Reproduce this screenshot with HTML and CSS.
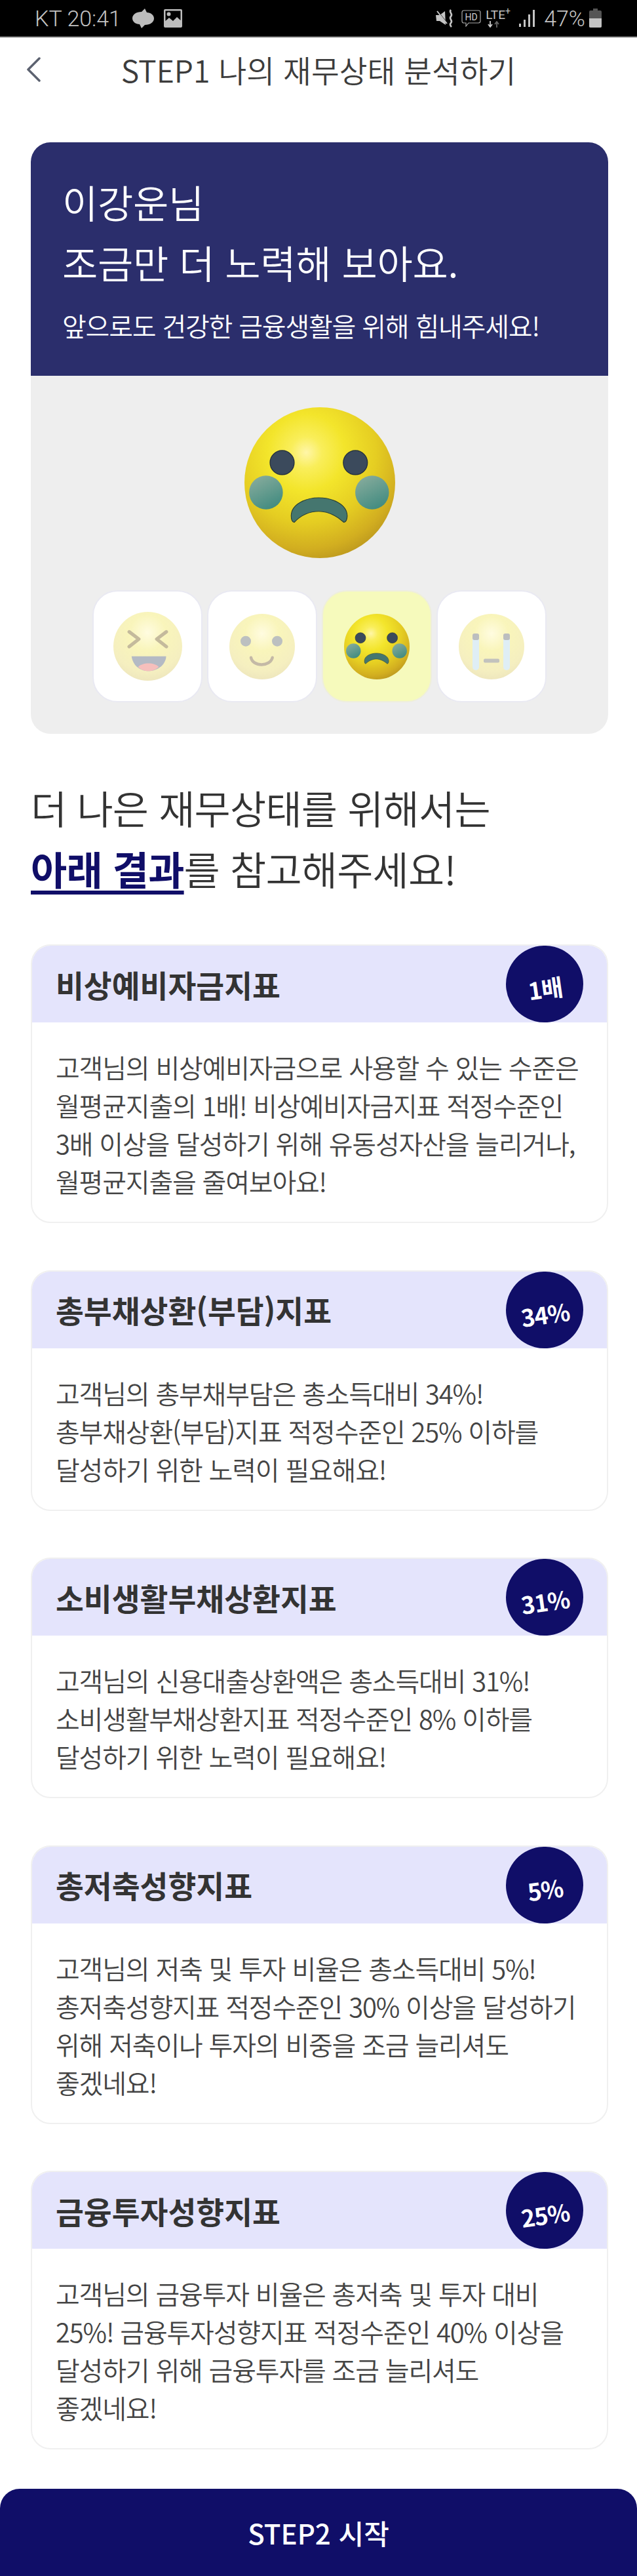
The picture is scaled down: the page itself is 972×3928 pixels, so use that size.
FILE: index.html
```html
<!DOCTYPE html>
<html lang="ko">
<head>
<meta charset="utf-8">
<title>STEP1 나의 재무상태 분석하기</title>
<link rel="stylesheet" href="styles.css">
</head>
<body>
<svg class="defs" aria-hidden="true">
  <defs>
    <radialGradient id="skin" cx="41%" cy="30%" r="75%">
      <stop offset="0" stop-color="#fff6a8"/>
      <stop offset=".14" stop-color="#f9ee5a"/>
      <stop offset=".34" stop-color="#f3e52b"/>
      <stop offset=".62" stop-color="#e5cd22"/>
      <stop offset=".85" stop-color="#d2ae20"/>
      <stop offset="1" stop-color="#b9951e"/>
    </radialGradient>
    <radialGradient id="skinpale" cx="50%" cy="30%" r="75%">
      <stop offset="0" stop-color="#fffce0"/>
      <stop offset=".35" stop-color="#f9f5bb"/>
      <stop offset=".75" stop-color="#f5efc0"/>
      <stop offset="1" stop-color="#ece4bc"/>
    </radialGradient>
    <linearGradient id="cheek" x1="25%" y1="0%" x2="75%" y2="100%">
      <stop offset="0" stop-color="#86ab9c"/>
      <stop offset="1" stop-color="#3f8a7f"/>
    </linearGradient>
    <symbol id="face-sad" viewBox="0 0 100 100">
      <circle cx="50" cy="50" r="50" fill="url(#skin)"/>
      <circle cx="25" cy="36.7" r="8" fill="#3b4a5c" stroke="#26323f" stroke-width=".6"/>
      <circle cx="73.6" cy="36.7" r="8" fill="#3b4a5c" stroke="#26323f" stroke-width=".6"/>
      <circle cx="14.3" cy="56.5" r="11.2" fill="url(#cheek)"/>
      <circle cx="84.7" cy="56.5" r="11.2" fill="url(#cheek)"/>
      <path d="M31 72C31 64 41 60 49.3 60C58 60 68 64 68.2 72Q68 76 66 76.3C60 71 54 69 49.3 69C44 69 38 71 33 76.3Q31 76 31 72Z" fill="#45766f" stroke="#2a3f33" stroke-width=".5"/>
    </symbol>
    <symbol id="face-laugh" viewBox="0 0 100 100">
      <circle cx="50" cy="50" r="50" fill="url(#skinpale)"/>
      <path d="M23 29L37 39.5L23 50.5M77 29L63 39.5L77 50.5" fill="none" stroke="#c4ba9c" stroke-width="5" stroke-linecap="round" stroke-linejoin="round"/>
      <path d="M26.5 64.5H76.7C76 77 64 86 51 86C38 86 28 77 26.5 64.5Z" fill="#b4bac4"/>
      <path d="M36 80C42 73 60 73 66 80C60 85 56 86 51 86C46 86 41 85 36 80Z" fill="#f6bfbc"/>
    </symbol>
    <symbol id="face-smile" viewBox="0 0 100 100">
      <circle cx="50" cy="50" r="50" fill="url(#skinpale)"/>
      <circle cx="25" cy="41.7" r="8" fill="#bcc0c0"/>
      <circle cx="73" cy="41.7" r="8" fill="#bcc0c0"/>
      <path d="M33 66.7C36 81 62 81 65.7 66.7" fill="none" stroke="#c4b9a6" stroke-width="4.500" stroke-linecap="round"/>
    </symbol>
    <symbol id="face-cry" viewBox="0 0 100 100">
      <circle cx="50" cy="50" r="50" fill="url(#skinpale)"/>
      <rect x="21" y="34" width="10" height="52" rx="5" fill="#dfeef5"/>
      <rect x="68" y="34" width="10" height="52" rx="5" fill="#dfeef5"/>
      <rect x="21" y="30" width="10" height="10" rx="3" fill="#bcbebf"/>
      <rect x="68" y="30" width="10" height="10" rx="3" fill="#bcbebf"/>
      <rect x="38" y="68.500" width="24" height="6" rx="2" fill="#c2c2bd"/>
    </symbol>
  </defs>
</svg>

<header class="status">
  <div class="status-group status-left">
    <span class="status-text">KT 20:41</span>
    <svg class="ico-sync" viewBox="0 0 33 30"><path fill="#bdbdbd" d="M19 0L22 6C28 6 33 10 33 15C33 21 27 25 19 25L14 30L11 24C5 24 0 20 0 15C0 9 6 5 14 5Z"/></svg>
    <svg class="ico-image" viewBox="0 0 28 28"><path fill="#bdbdbd" fill-rule="evenodd" d="M2 0H26Q28 0 28 2V26Q28 28 26 28H2Q0 28 0 26V2Q0 0 2 0ZM2.500 2.500V18L8 13L14 18L20 12L25.500 17V2.500ZM7.500 4.500A3 3 0 1 1 7.500 10.500A3 3 0 1 1 7.500 4.500Z"/></svg>
  </div>
  <div class="status-group status-right">
    <svg class="ico-mute" viewBox="0 0 28 28"><path fill="#c4c4c4" d="M0 9H6L14 3L15 24L6 18H1Z"/><path d="M1 1L16 20" stroke="#000" stroke-width="2"/><path d="M2 3L17 22" stroke="#c4c4c4" stroke-width="2"/><path d="M23 1C19 5 27 7 23 11C19 15 27 17 23 21C21 23 22 25 24 27" fill="none" stroke="#c4c4c4" stroke-width="2.600"/></svg>
    <svg class="ico-hd" viewBox="0 0 30 26"><path d="M4 1H26Q29 1 29 4V17Q29 20 26 20H11L7 25V20H4Q1 20 1 17V4Q1 1 4 1Z" fill="none" stroke="#aaa" stroke-width="1.200"/><text x="15" y="16" text-anchor="middle" class="hd-text">HD</text></svg>
    <span class="lte">
      <span class="lte-text">LTE<sup class="lte-plus">+</sup></span>
      <svg class="ico-arrows" viewBox="0 0 20 10"><path d="M5 0V8M2 5L5 9L8 5" fill="none" stroke="#ccc" stroke-width="1.800"/><path d="M15 10V2M12 5L15 1L18 5" fill="none" stroke="#666" stroke-width="1.800"/></svg>
    </span>
    <svg class="ico-signal" viewBox="0 0 25 28"><rect x="0" y="22" width="3" height="5" fill="#c4c4c4"/><rect x="7" y="16" width="3" height="11" fill="#c4c4c4"/><rect x="14" y="8" width="3" height="19" fill="#c4c4c4"/><rect x="21" y="1" width="3" height="26" fill="#c4c4c4"/></svg>
    <span class="status-text">47%</span>
    <svg class="ico-battery" viewBox="0 0 19 29"><path d="M6 0H13V3H17Q19 3 19 5V27Q19 29 17 29H2Q0 29 0 27V5Q0 3 2 3H6Z" fill="#555"/><path d="M0 15H19V27Q19 29 17 29H2Q0 29 0 27Z" fill="#c4c4c4"/></svg>
  </div>
</header>

<nav class="topbar">
  <svg class="back" viewBox="0 0 22 38"><path d="M20 2L3 19L20 36" fill="none" stroke="#5c6270" stroke-width="3.500" stroke-linecap="round" stroke-linejoin="round"/></svg>
  <h1 class="page-title">STEP1 나의 재무상태 분석하기</h1>
  <span></span>
</nav>

<main class="content">
  <section class="hero">
    <div class="hero-top">
      <p class="hero-title">이강운님<br>조금만 더 노력해 보아요.</p>
      <p class="hero-sub">앞으로도 건강한 금융생활을 위해 힘내주세요!</p>
    </div>
    <div class="hero-body">
      <svg class="face-large"><use href="#face-sad"/></svg>
      <div class="tiles">
        <div class="tile"><svg class="face-one"><use href="#face-laugh"/></svg></div>
        <div class="tile"><svg class="face-small"><use href="#face-smile"/></svg></div>
        <div class="tile tile-active"><svg class="face-small"><use href="#face-sad"/></svg></div>
        <div class="tile"><svg class="face-small"><use href="#face-cry"/></svg></div>
      </div>
    </div>
  </section>

  <h2 class="lead">더 나은 재무상태를 위해서는<br><strong class="lead-mark">아래 결과</strong>를 참고해주세요!</h2>

  <article class="card">
    <div class="card-head"><h3 class="card-title">비상예비자금지표</h3><span class="badge">1배</span></div>
    <p class="card-text">고객님의 비상예비자금으로 사용할 수 있는 수준은<br>월평균지출의 1배! 비상예비자금지표 적정수준인<br>3배 이상을 달성하기 위해 유동성자산을 늘리거나,<br>월평균지출을 줄여보아요!</p>
  </article>
  <article class="card">
    <div class="card-head"><h3 class="card-title">총부채상환(부담)지표</h3><span class="badge">34%</span></div>
    <p class="card-text">고객님의 총부채부담은 총소득대비 34%!<br>총부채상환(부담)지표 적정수준인 25% 이하를<br>달성하기 위한 노력이 필요해요!</p>
  </article>
  <article class="card">
    <div class="card-head"><h3 class="card-title">소비생활부채상환지표</h3><span class="badge">31%</span></div>
    <p class="card-text">고객님의 신용대출상환액은 총소득대비 31%!<br>소비생활부채상환지표 적정수준인 8% 이하를<br>달성하기 위한 노력이 필요해요!</p>
  </article>
  <article class="card">
    <div class="card-head"><h3 class="card-title">총저축성향지표</h3><span class="badge">5%</span></div>
    <p class="card-text">고객님의 저축 및 투자 비율은 총소득대비 5%!<br>총저축성향지표 적정수준인 30% 이상을 달성하기<br>위해 저축이나 투자의 비중을 조금 늘리셔도<br>좋겠네요!</p>
  </article>
  <article class="card">
    <div class="card-head"><h3 class="card-title">금융투자성향지표</h3><span class="badge">25%</span></div>
    <p class="card-text">고객님의 금융투자 비율은 총저축 및 투자 대비<br>25%! 금융투자성향지표 적정수준인 40% 이상을<br>달성하기 위해 금융투자를 조금 늘리셔도<br>좋겠네요!</p>
  </article>
</main>

<button class="cta">STEP2 시작</button>
</body>
</html>
```
FILE: styles.css
```css
* { box-sizing: border-box; }
html, body { margin: 0; padding: 0; background: #fff; }
body {
  width: 972px;
  height: 3928px;
  overflow: hidden;
  font-family: "Noto Sans CJK KR", "Noto Sans", sans-serif;
  color: #444;
}
p, h1, h2, h3 { margin: 0; font-weight: 400; }
.defs { position: absolute; width: 0; height: 0; }

/* status bar */
.status {
  height: 57px;
  background: #000;
  border-bottom: 2px solid #555;
  display: flex;
  justify-content: space-between;
  align-items: center;
  padding: 0 54px 0 53px;
}
.status-group { display: flex; align-items: center; }
.status-text {
  font-family: Roboto, "Noto Sans", sans-serif;
  font-weight: 300;
  font-size: 34px;
  line-height: 40px;
  color: #c4c4c4;
}
.ico-sync { width: 33px; height: 30px; margin-left: 17px; }
.ico-image { width: 28px; height: 28px; margin-left: 15px; }
.ico-mute { width: 28px; height: 28px; }
.ico-hd { width: 30px; height: 26px; margin-left: 11px; }
.hd-text { font-family: Roboto, sans-serif; font-size: 14px; fill: #ccc; }
.lte { display: flex; flex-direction: column; width: 44px; margin-left: 7px; }
.lte-text {
  font-family: Roboto, sans-serif;
  font-size: 19px;
  line-height: 19px;
  color: #c4c4c4;
}
.lte-plus { font-size: 14px; line-height: 0; }
.ico-arrows { width: 20px; height: 10px; margin-left: 2px; }
.ico-signal { width: 25px; height: 28px; margin: 0 13px 0 7px; }
.ico-battery { width: 19px; height: 29px; margin-left: 6px; }

/* top bar */
.topbar {
  height: 98px;
  display: grid;
  grid-template-columns: 1fr auto 1fr;
  align-items: center;
  padding-left: 40px;
}
.back { width: 22px; height: 38px; }
.page-title {
  font-size: 46.5px;
  font-weight: 350;
  line-height: 60px;
  color: #3c3c3c;
  margin-left: -40px;
}

.content { padding: 62px 44px 0 47px; }

/* hero */
.hero { border-radius: 30px; overflow: hidden; }
.hero-top { background: #2b2e6c; padding: 45px 50px 47px 48px; color: #fff; }
.hero-title { font-size: 59px; font-weight: 350; line-height: 92px; letter-spacing: -.3px; }
.hero-sub { font-size: 40px; font-weight: 350; line-height: 60px; margin-top: 20px; letter-spacing: -1.2px; }
.hero-body {
  background: #eee;
  padding: 47px 0 48px;
  display: flex;
  flex-direction: column;
  align-items: center;
}
.face-large { width: 230px; height: 232px; }
.tiles { display: flex; gap: 7px; margin-top: 48px; }
.tile {
  width: 168px;
  height: 171px;
  border: 2px solid #e9e9f2;
  border-radius: 38px;
  background: #fff;
  display: flex;
  align-items: center;
  justify-content: center;
}
.face-one { width: 105px; height: 105px; }
.face-small { width: 100px; height: 102px; }
.tile-active { background: #f6fabc; border-color: #eeeedd; }

/* lead */
.lead {
  font-size: 60px;
  font-weight: 350;
  line-height: 93px;
  letter-spacing: -.8px;
  color: #333;
  margin: 65px 0 70px;
}
.lead-mark { font-weight: 700; color: #100e68; text-decoration: underline; text-underline-offset: 8px; }

/* cards */
.card {
  border: 2px solid #f0f0f0;
  border-radius: 30px;
  overflow: hidden;
  margin-bottom: 71.5px;
}
.card-head {
  height: 117px;
  background: #e4e4fc;
  display: flex;
  align-items: center;
  justify-content: space-between;
  padding: 0 36px 0 36px;
}
.card-title { font-size: 46.6px; font-weight: 700; color: #333; line-height: 60px; }
.badge {
  width: 118px;
  height: 117px;
  padding-top: 10px;
  border-radius: 50%;
  background: #100e68;
  color: #fff;
  display: flex;
  align-items: center;
  justify-content: center;
  font-size: 36px;
  font-weight: 700;
  letter-spacing: -1px;
  transform: rotate(-8deg);
}
.card-text { font-size: 40px; font-weight: 350; line-height: 58px; letter-spacing: -1.2px; color: #444; padding: 39px 20px 33px 36px; white-space: nowrap; }

/* button */
.cta {
  position: absolute;
  left: 0;
  top: 3795px;
  width: 972px;
  height: 133px;
  background: #100e68;
  border: 0;
  border-radius: 30px 30px 0 0;
  color: #fff;
  font-family: "Noto Sans CJK KR", sans-serif;
  font-size: 42px;
  font-weight: 500;
}
```
